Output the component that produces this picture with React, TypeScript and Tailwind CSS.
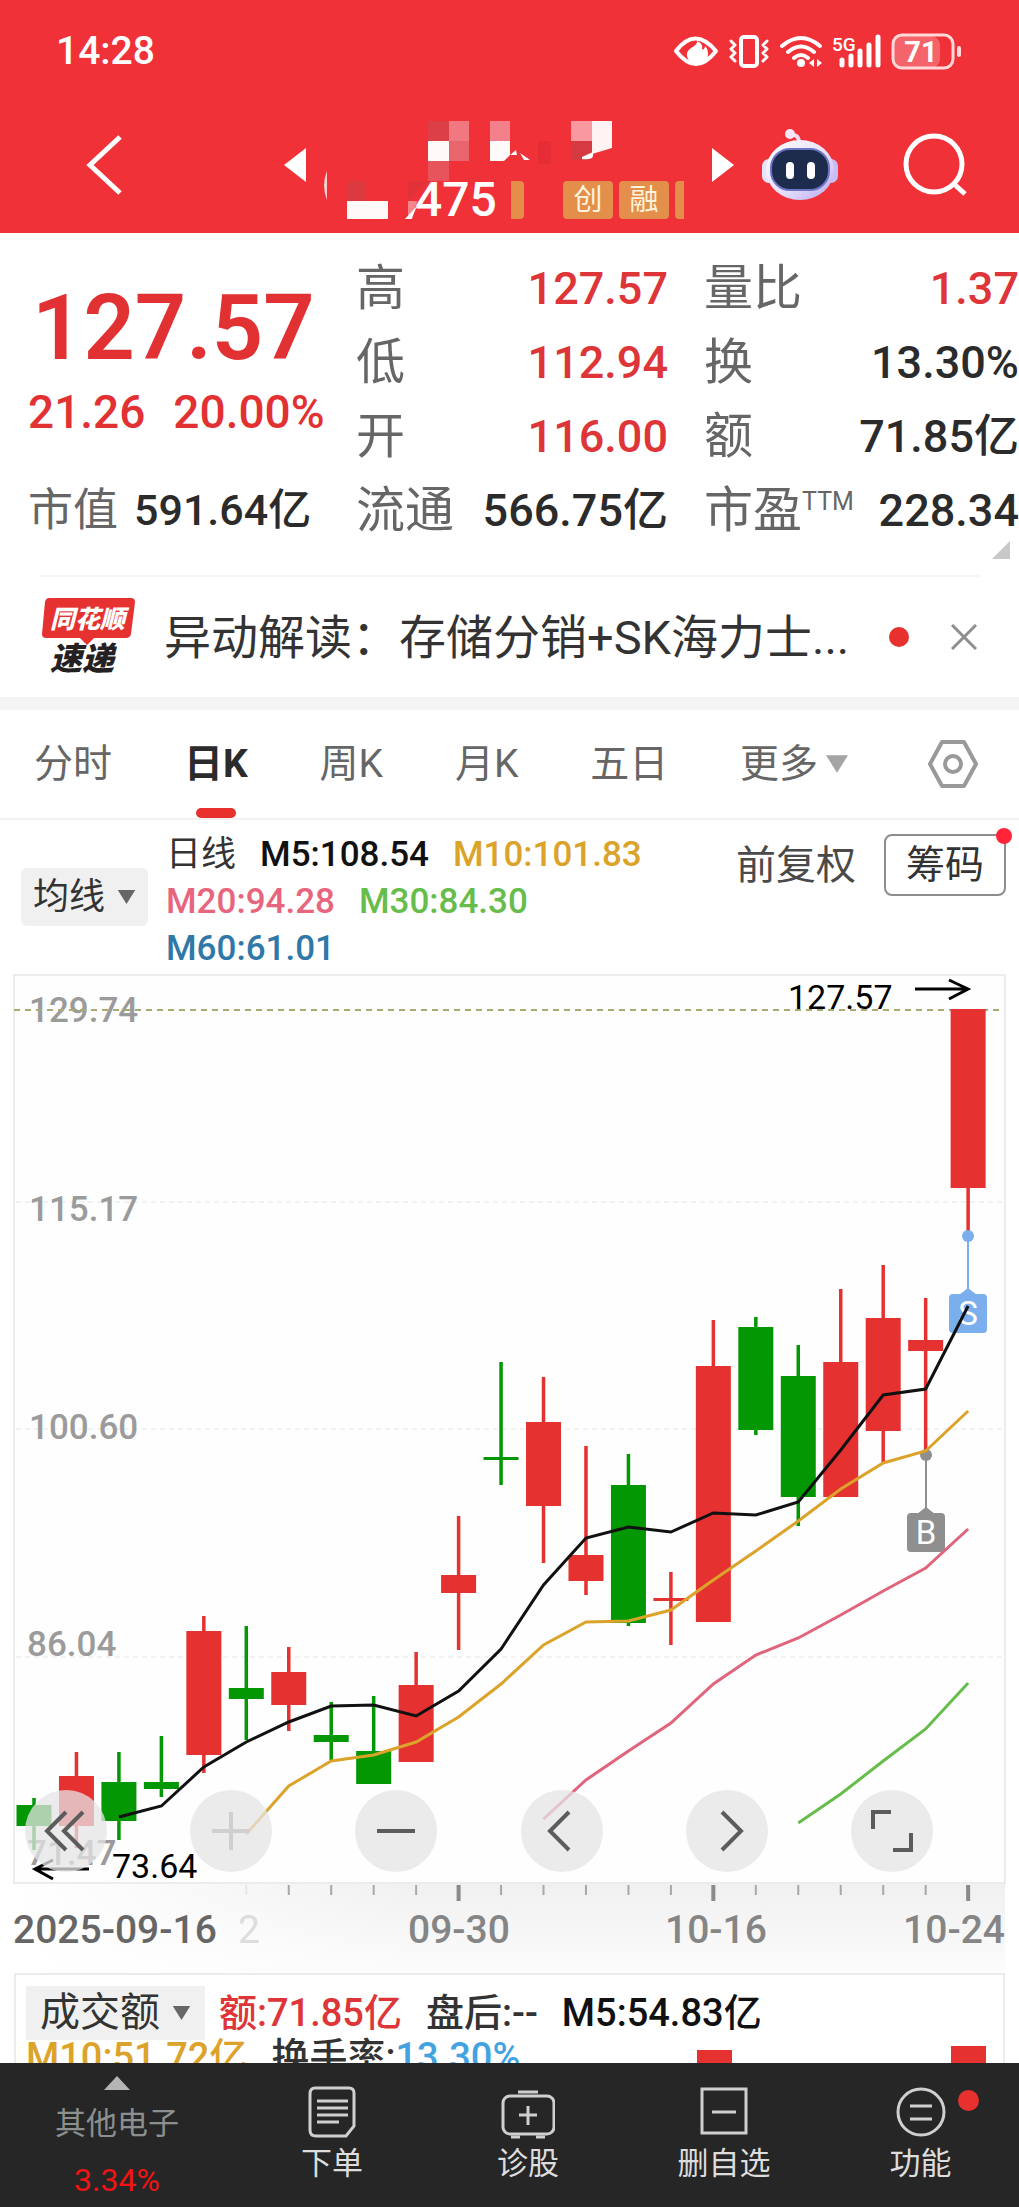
import type { ReactNode } from 'react';

type Candle = {
    up: boolean;
    high: number;
    top: number;
    bottom: number;
    low: number;
};

const RED = '#e63131';
const GREEN = '#039803';

// Chart space: 1019 wide, y grows downwards from the top of the price panel.
const FIRST_X = 34;
const STEP = 42.46;
const BODY_WIDTH = 35;
const TOP = 969;

const candles: Candle[] = [
    { up: false, high: 1798, top: 1805, bottom: 1826, low: 1850 },
    { up: true, high: 1752, top: 1776, bottom: 1826, low: 1848 },
    { up: false, high: 1752, top: 1782, bottom: 1821, low: 1840 },
    { up: false, high: 1736, top: 1782, bottom: 1789, low: 1797 },
    { up: true, high: 1616, top: 1631, bottom: 1755, low: 1773 },
    { up: false, high: 1626, top: 1688, bottom: 1699, low: 1740 },
    { up: true, high: 1647, top: 1672, bottom: 1705, low: 1731 },
    { up: false, high: 1702, top: 1735, bottom: 1742, low: 1760 },
    { up: false, high: 1696, top: 1751, bottom: 1784, low: 1784 },
    { up: true, high: 1652, top: 1685, bottom: 1762, low: 1762 },
    { up: true, high: 1516, top: 1575, bottom: 1593, low: 1650 },
    { up: false, high: 1362, top: 1457, bottom: 1460, low: 1485 },
    { up: true, high: 1377, top: 1422, bottom: 1506, low: 1563 },
    { up: true, high: 1446, top: 1555, bottom: 1581, low: 1595 },
    { up: false, high: 1454, top: 1485, bottom: 1623, low: 1626 },
    { up: true, high: 1572, top: 1598, bottom: 1601, low: 1645 },
    { up: true, high: 1320, top: 1366, bottom: 1622, low: 1622 },
    { up: false, high: 1317, top: 1327, bottom: 1430, low: 1435 },
    { up: false, high: 1345, top: 1376, bottom: 1497, low: 1526 },
    { up: true, high: 1289, top: 1362, bottom: 1497, low: 1497 },
    { up: true, high: 1265, top: 1318, bottom: 1431, low: 1463 },
    { up: true, high: 1298, top: 1340, bottom: 1351, low: 1455 },
    { up: true, high: 1009, top: 1009, bottom: 1188, low: 1236 },
];

const averages = [
    {
        name: 'M10',
        color: '#dba32a',
        start: 5,
        values: [
            1834, 1786, 1761, 1755, 1742, 1717, 1684, 1645, 1622, 1621, 1610,
            1580, 1551, 1521, 1489, 1463, 1451, 1411,
        ],
    },
    {
        name: 'M20',
        color: '#e0647c',
        start: 12,
        values: [
            1819, 1780, 1751, 1723, 1684, 1655, 1638, 1615, 1591, 1568, 1529,
        ],
    },
    {
        name: 'M30',
        color: '#67bd4b',
        start: 18,
        values: [1823, 1794, 1761, 1729, 1683],
    },
    {
        name: 'M5',
        color: '#111111',
        start: 2,
        values: [
            1817, 1806, 1767, 1742, 1722, 1706, 1705, 1716, 1691, 1649, 1585,
            1538, 1527, 1532, 1513, 1515, 1502, 1450, 1395, 1389, 1306,
        ],
    },
];

const priceLabels = [
    { text: '129.74', x: 29, y: 1022 },
    { text: '115.17', x: 29, y: 1221 },
    { text: '100.60', x: 29, y: 1439 },
    { text: '86.04', x: 27, y: 1656 },
    { text: '71.47', x: 27, y: 1865 },
];

const legend = [
    { text: 'M5:108.54', className: 'text-[#111111]' },
    { text: 'M10:101.83', className: 'text-[#dba32a]' },
    { text: 'M20:94.28', className: 'text-[#e8657e]' },
    { text: 'M30:84.30', className: 'text-[#67bd4b]' },
    { text: 'M60:61.01', className: 'text-[#2f78a8]' },
];

const xAt = (index: number) => FIRST_X + index * STEP;

function Caret({ className }: { className: string }) {
    return (
        <svg viewBox="0 0 20 16" className={className} aria-hidden="true">
            <path d="M0 0h20L10 16z" fill="currentColor" />
        </svg>
    );
}

function StatusBar() {
    return (
        <div className="flex h-[102px] items-center justify-between pr-14 pl-14">
            <span className="text-[39px] leading-none font-medium">14:28</span>
            <svg
                viewBox="673 30 290 40"
                className="h-10 w-[290px]"
                fill="none"
                stroke="#fff"
                aria-hidden="true"
            >
                <path
                    d="M676 50q19-25 40 0q-20 26-40 0z"
                    strokeWidth="4"
                    strokeLinejoin="round"
                />
                <path
                    d="M697 40c1 5-8 6-10 12c-1 7 5 11 10 11c7 0 11-5 11-10c0-4-1-6-3-8c0 3-2 4-3 3c1-4-1-6-5-8z"
                    fill="#fff"
                    stroke="none"
                />
                <rect x="741" y="36" width="16" height="29" rx="3" strokeWidth="4" />
                <path
                    d="M731 40l4 4l-4 4l4 4l-4 4l4 4M767 40l-4 4l4 4l-4 4l4 4l-4 4"
                    strokeWidth="3"
                    strokeLinecap="round"
                    strokeLinejoin="round"
                />
                <path
                    d="M782 45q19-16 38 0M788 51q13-11 26 0M794 57q7-6 14 0"
                    strokeWidth="4"
                    strokeLinecap="round"
                />
                <circle cx="801" cy="62" r="4" fill="#fff" stroke="none" />
                <path d="M809 62l5-4v8zM822 62l-5-4v8z" fill="#fff" stroke="none" />
                <text
                    x="832"
                    y="50"
                    fontSize="19"
                    fontWeight="500"
                    fill="#fff"
                    stroke="none"
                >
                    5G
                </text>
                <path
                    d="M842 59v5M851 55v9M860 50v14M869 44v20M878 36v28"
                    strokeWidth="5"
                    strokeLinecap="round"
                />
                <rect
                    x="893"
                    y="35"
                    width="47"
                    height="32"
                    rx="9"
                    fill="#f5646a"
                    stroke="none"
                />
                <rect
                    x="893"
                    y="34"
                    width="60"
                    height="33"
                    rx="9"
                    stroke="#ffd9da"
                    strokeWidth="3"
                />
                <rect
                    x="957"
                    y="45"
                    width="4"
                    height="11"
                    rx="2"
                    fill="#ffd9da"
                    stroke="none"
                />
                <text
                    x="921"
                    y="61"
                    fontSize="29"
                    fontWeight="700"
                    textAnchor="middle"
                    fill="#fff"
                    stroke="none"
                >
                    71
                </text>
            </svg>
        </div>
    );
}

function Badge({ children }: { children: ReactNode }) {
    return (
        <span className="flex h-[38px] w-[50px] items-center justify-center rounded-sm bg-[#e38f4b] text-[29px] leading-none text-[#fff3dc]">
            {children}
        </span>
    );
}

function RobotIcon() {
    return (
        <svg viewBox="0 0 76 72" className="h-[72px] w-[76px]" aria-hidden="true">
            <defs>
                <linearGradient id="shell" x1="0" y1="0" x2="1" y2="1">
                    <stop offset="0" stopColor="#ffffff" />
                    <stop offset="0.6" stopColor="#e3dcfa" />
                    <stop offset="1" stopColor="#b7a4ee" />
                </linearGradient>
            </defs>
            <path
                d="M27 6q10-2 10 8"
                fill="none"
                stroke="#f3dcf3"
                strokeWidth="4"
            />
            <circle cx="28" cy="5" r="5" fill="#f7e6f7" />
            <rect x="0" y="30" width="14" height="24" rx="7" fill="#e9e2fb" />
            <rect x="62" y="30" width="14" height="24" rx="7" fill="#c9bcf3" />
            <ellipse cx="38" cy="41" rx="34" ry="30" fill="url(#shell)" />
            <rect
                x="9"
                y="20"
                width="58"
                height="41"
                rx="19"
                fill="#1d2b4d"
                stroke="#6c74c4"
                strokeWidth="2"
            />
            <rect x="24" y="33" width="8" height="17" rx="4" fill="#fff" />
            <rect x="45" y="33" width="8" height="17" rx="4" fill="#fff" />
        </svg>
    );
}

// The stock name and most of the code are pixelated out.
function MaskedTitle() {
    return (
        <div className="relative flex h-[109px] w-[372px] flex-col justify-end">
            <div className="flex h-[38px] items-center pl-[92px]">
                <span className="w-[82px] text-[48px] leading-none font-medium">
                    475
                </span>
                <span className="ml-[14px] h-[38px] w-[13px] rounded-r-sm bg-[#e38f4b]" />
                <span className="ml-[39px] flex gap-[6px]">
                    <Badge>创</Badge>
                    <Badge>融</Badge>
                    <span className="h-[38px] w-[9px] rounded-l-sm bg-[#e38f4b]" />
                </span>
            </div>
            <svg
                viewBox="323 110 372 109"
                className="absolute inset-0 h-full w-full"
                aria-hidden="true"
            >
                <rect x="428" y="121" width="21" height="20" fill="#dc3f45" />
                <rect x="449" y="121" width="20" height="20" fill="#f17880" />
                <rect x="449" y="141" width="20" height="20" fill="#e8656d" />
                <rect x="428" y="141" width="21" height="20" fill="#fffafa" />
                <rect x="428" y="161" width="21" height="20" fill="#e7545b" />
                <rect x="490" y="121" width="20" height="20" fill="#f3808a" />
                <path d="M490 141h20v14l-6 6h-14z" fill="#fffafa" />
                <path d="M510 155l6-5l1 5zM520 153l10 7h-6z" fill="#fff" />
                <rect x="538" y="141" width="13" height="23" fill="#e62d35" />
                <rect x="571" y="121" width="21" height="20" fill="#fa98a0" />
                <rect x="571" y="141" width="21" height="19" fill="#d63a41" />
                <path d="M592 121h20v27l-20 6z" fill="#fff3f3" />
                <path d="M582 157l11-5v4q-1 4-11 3z" fill="#fff" />
                <rect x="347" y="181" width="19" height="20" fill="#dc3940" />
                <rect x="347" y="201" width="41" height="20" fill="#fffafa" />
                <path d="M408 181h20l-20 20z" fill="#e23239" />
                <path d="M408 201h9l-5 19h-4z" fill="#f4878c" />
                <path d="M404 220l13-14l-6 14z" fill="#fff" />
                <path d="M327 171q-6 14 0 29z" fill="#ffd0d0" />
            </svg>
        </div>
    );
}

function Header() {
    return (
        <header className="bg-[#f03138] text-white">
            <StatusBar />
            <div className="flex h-[131px] items-center pr-13 pb-[6px] pl-[86px]">
                <button type="button" aria-label="返回">
                    <svg
                        viewBox="0 0 36 60"
                        className="h-[60px] w-9"
                        fill="none"
                        stroke="#fff"
                        strokeWidth="5"
                    >
                        <path d="M34 2L4 30l30 28" />
                    </svg>
                </button>
                <div className="ml-auto flex items-center gap-[17px]">
                    <button type="button" aria-label="上一只">
                        <svg viewBox="0 0 22 34" className="h-[34px] w-[22px]">
                            <path d="M22 0v34L0 17z" fill="#fff" />
                        </svg>
                    </button>
                    <MaskedTitle />
                    <button type="button" aria-label="下一只">
                        <svg viewBox="0 0 22 34" className="h-[34px] w-[22px]">
                            <path d="M0 0v34l22-17z" fill="#fff" />
                        </svg>
                    </button>
                </div>
                <button type="button" aria-label="助手" className="ml-7">
                    <RobotIcon />
                </button>
                <button type="button" aria-label="搜索" className="ml-[65px]">
                    <svg
                        viewBox="0 0 64 64"
                        className="size-16"
                        fill="none"
                        stroke="#fff"
                        strokeWidth="5"
                    >
                        <circle cx="31" cy="31" r="28" />
                        <path d="M51 51l11 10" />
                    </svg>
                </button>
            </div>
        </header>
    );
}

type StatProps = {
    label: ReactNode;
    value: string;
    red?: boolean;
};

function Stat({ label, value, red }: StatProps) {
    return (
        <div className="flex h-[74px] items-center justify-between whitespace-nowrap">
            <dt className="text-[49px] leading-none text-[#666666]">{label}</dt>
            <dd
                className={
                    red
                        ? 'text-[45px] leading-none font-medium text-[#dd3538]'
                        : 'text-[45px] leading-none font-medium text-[#2b2b2b]'
                }
            >
                {value}
            </dd>
        </div>
    );
}

function Quote() {
    return (
        <section className="relative grid grid-cols-[292fr_312fr_315fr] gap-x-9 pt-[18px] pb-7 pl-7">
            <div className="min-w-0 whitespace-nowrap">
                <div className="flex h-[222px] flex-col text-[#e23133]">
                    <strong className="pt-8 pl-1 text-[90px] leading-[92px] font-semibold">
                        127.57
                    </strong>
                    <div className="flex gap-7 pt-2 text-[46px] leading-[58px] font-medium">
                        <span>21.26</span>
                        <span>20.00%</span>
                    </div>
                </div>
                <dl className="flex h-[74px] items-center gap-4">
                    <dt className="text-[45px] leading-none text-[#666666]">
                        市值
                    </dt>
                    <dd className="text-[43px] leading-none font-medium text-[#2b2b2b]">
                        591.64亿
                    </dd>
                </dl>
            </div>
            <dl>
                <Stat label="高" value="127.57" red />
                <Stat label="低" value="112.94" red />
                <Stat label="开" value="116.00" red />
                <Stat label="流通" value="566.75亿" />
            </dl>
            <dl>
                <Stat label="量比" value="1.37" red />
                <Stat label="换" value="13.30%" />
                <Stat label="额" value="71.85亿" />
                <Stat
                    label={
                        <span className="flex items-start">
                            市盈
                            <span className="text-[25px] leading-[32px]">
                                TTM
                            </span>
                        </span>
                    }
                    value="228.34"
                />
            </dl>
            <svg
                viewBox="0 0 18 18"
                className="absolute right-[9px] bottom-4 size-[18px]"
                aria-hidden="true"
            >
                <path d="M18 0v18H0z" fill="#c8c8c8" />
            </svg>
        </section>
    );
}

function News() {
    return (
        <section className="mx-10 flex h-[122px] items-center border-t-2 border-[#f5f5f5] whitespace-nowrap">
            <svg
                viewBox="0 0 98 84"
                className="h-[84px] w-[98px] shrink-0"
                role="img"
                aria-label="同花顺速递"
            >
                <path
                    d="M9 3h82q4 0 4 4l-4 32q-1 4-5 4H54l-7 7l-7-7H6q-4 0-4-4L5 7q1-4 4-4z"
                    fill={RED}
                />
                <text
                    x="10"
                    y="33"
                    fontSize="25"
                    fontWeight="900"
                    fontStyle="italic"
                    fill="#fff"
                >
                    同花顺
                </text>
                <text
                    x="10"
                    y="75"
                    fontSize="32"
                    fontWeight="900"
                    fontStyle="italic"
                    fill="#252022"
                >
                    速递
                </text>
            </svg>
            <a
                href="#news"
                className="ml-[26px] text-[47px] leading-none text-[#333333]"
            >
                异动解读：存储分销+SK海力士...
            </a>
            <span className="ml-auto size-5 rounded-full bg-[#e8302f]" />
            <button type="button" aria-label="关闭" className="mr-[2px] ml-[42px]">
                <svg
                    viewBox="0 0 26 26"
                    className="size-[26px]"
                    stroke="#8e8e8e"
                    strokeWidth="3"
                >
                    <path d="M1 1l24 24M25 1L1 25" />
                </svg>
            </button>
        </section>
    );
}

function Tabs() {
    return (
        <nav className="flex h-[110px] items-center justify-between border-b-2 border-[#f1f1f1] pr-[41px] pl-[34px] text-[39px] leading-none text-[#666666]">
            <button type="button">分时</button>
            <button
                type="button"
                className="relative flex h-full items-center font-bold text-[#2b2b2b]"
            >
                日K
                <span className="absolute bottom-0 left-1/2 h-[10px] w-10 -translate-x-1/2 rounded-full bg-[#e8302f]" />
            </button>
            <button type="button">周K</button>
            <button type="button">月K</button>
            <button type="button">五日</button>
            <button type="button" className="mr-2 flex items-center gap-2">
                更多
                <Caret className="h-[18px] w-[22px] text-[#a5a5a5]" />
            </button>
            <button type="button" aria-label="设置">
                <svg
                    viewBox="0 0 50 48"
                    className="h-12 w-[50px]"
                    fill="none"
                    stroke="#999999"
                    strokeWidth="4"
                    strokeLinejoin="round"
                >
                    <path d="M14 2h22l12 22l-12 22H14L2 24z" />
                    <circle cx="25" cy="24" r="8" />
                </svg>
            </button>
        </nav>
    );
}

function Legend() {
    return (
        <section className="flex h-[149px] items-start pt-2 pr-[13px] pl-[21px] whitespace-nowrap">
            <button
                type="button"
                className="mt-[40px] flex h-[58px] items-center gap-3 rounded-md bg-[#f0f0f0] px-3 text-[36px] leading-none text-[#333333]"
            >
                均线
                <Caret className="h-[14px] w-[19px] text-[#666666]" />
            </button>
            <div className="mt-[3px] ml-[18px] flex w-[520px] flex-wrap gap-x-6 text-[35px] leading-[47px] font-medium">
                <span className="font-normal text-[#333333]">日线</span>
                {legend.map((item) => (
                    <span key={item.text} className={item.className}>
                        {item.text}
                    </span>
                ))}
            </div>
            <button
                type="button"
                className="mt-4 ml-auto text-[40px] leading-[44px] text-[#4a4a4a]"
            >
                前复权
            </button>
            <button
                type="button"
                className="relative mt-[6px] ml-7 h-[62px] rounded-lg border-2 border-[#8d8d8d] px-5 text-[39px] leading-none text-[#333333]"
            >
                筹码
                <span className="absolute -top-2 -right-2 size-4 rounded-full bg-[#ff2438]" />
            </button>
        </section>
    );
}

function Marker({
    x,
    y,
    color,
    children,
}: {
    x: number;
    y: number;
    color: string;
    children: string;
}) {
    return (
        <g>
            <path d={`M${x} ${y}v54`} stroke={color} strokeWidth="2" />
            <circle cx={x} cy={y} r="6" fill={color} />
            <path d={`M${x - 9} ${y + 59}l9-7l9 7z`} fill={color} />
            <rect
                x={x - 19}
                y={y + 58}
                width="38"
                height="39"
                rx="4"
                fill={color}
            />
            <text
                x={x}
                y={y + 89}
                fontSize="33"
                textAnchor="middle"
                fill="#fff"
            >
                {children}
            </text>
        </g>
    );
}

function PriceChart() {
    return (
        <svg
            viewBox="0 969 1019 1004"
            className="block w-full"
            role="img"
            aria-label="日K线图"
        >
            <defs>
                <linearGradient id="axis" x1="0" y1="0" x2="0" y2="1">
                    <stop offset="0" stopColor="#f0f0f0" />
                    <stop offset="1" stopColor="#fcfcfc" />
                </linearGradient>
                <linearGradient id="axisFade" x1="0" y1="0" x2="1" y2="0">
                    <stop offset="0" stopColor="#fff" />
                    <stop offset="1" stopColor="#fff" stopOpacity="0" />
                </linearGradient>
            </defs>
            <rect x="14" y="1883" width="991" height="90" fill="url(#axis)" />
            <rect x="14" y="1883" width="420" height="90" fill="url(#axisFade)" />
            <rect
                x="14"
                y={TOP + 6}
                width="991"
                height="908"
                fill="#fefefe"
                stroke="#ebeded"
                strokeWidth="2"
            />
            {[1202, 1429, 1657].map((y) => (
                <path
                    key={y}
                    d={`M16 ${y}h988`}
                    stroke="#e6e6e6"
                    strokeWidth="1"
                    strokeDasharray="5 4"
                />
            ))}
            {priceLabels.map((label) => (
                <text
                    key={label.text}
                    x={label.x}
                    y={label.y}
                    fontSize="35"
                    fontWeight="500"
                    fill="#9b9b9b"
                >
                    {label.text}
                </text>
            ))}
            <path
                d="M14 1010h990"
                stroke="#a9ab72"
                strokeWidth="2"
                strokeDasharray="6 5"
            />
            {candles.map((candle, index) => {
                const x = xAt(index);
                const color = candle.up ? RED : GREEN;
                return (
                    <g key={index} fill={color}>
                        <rect
                            x={x - 1.75}
                            y={candle.high}
                            width="3.5"
                            height={candle.low - candle.high}
                        />
                        <rect
                            x={x - BODY_WIDTH / 2}
                            y={candle.top}
                            width={BODY_WIDTH}
                            height={candle.bottom - candle.top}
                        />
                    </g>
                );
            })}
            <Marker x={968} y={1236} color="#7baeec">
                S
            </Marker>
            <Marker x={926} y={1455} color="#8f8f8f">
                B
            </Marker>
            {averages.map((line) => (
                <polyline
                    key={line.name}
                    points={line.values
                        .map((y, index) => `${xAt(line.start + index)},${y}`)
                        .join(' ')}
                    fill="none"
                    stroke={line.color}
                    strokeWidth="3"
                />
            ))}
            <text x="788" y="1009" fontSize="34">
                127.57
            </text>
            <text x="112" y="1878" fontSize="34">
                73.64
            </text>
            <path
                d="M915 989h52M949 980l19 9l-19 10M89 1869H36M53 1860l-18 9l18 10"
                fill="none"
                stroke="#000"
                strokeWidth="3"
            />
            {candles.slice(5).map((_, index) => {
                const day = index + 5;
                const major = [10, 16, 22].includes(day);
                return (
                    <rect
                        key={day}
                        x={xAt(day) - (major ? 2 : 1)}
                        y="1885"
                        width={major ? 4 : 2}
                        height={major ? 16 : 10}
                        fill={major ? '#8a8a8a' : '#a8a8a8'}
                        opacity={day === 5 ? 0.2 : 1}
                    />
                );
            })}
            <g fontSize="39" fontWeight="500" fill="#858585">
                <text x="13" y="1943" fill="#666666">
                    2025-09-16
                </text>
                <text x="238" y="1943" fontWeight="400" fill="#dddddd">
                    2
                </text>
                <text x="459" y="1943" textAnchor="middle">
                    09-30
                </text>
                <text x="716" y="1943" textAnchor="middle">
                    10-16
                </text>
                <text x="1005" y="1943" textAnchor="end">
                    10-24
                </text>
            </g>
        </svg>
    );
}

const chartControls = [
    {
        label: '最早',
        path: 'M41 22L22 41l19 19M58 22L39 41l19 19',
        className: 'text-[#5c5c5c]',
    },
    { label: '放大', path: 'M22 41h37M41 22v38', className: 'text-[#cfcfcf]' },
    { label: '缩小', path: 'M22 41h38', className: 'text-[#5c5c5c]' },
    { label: '左移', path: 'M48 22L29 41l19 19', className: 'text-[#5c5c5c]' },
    { label: '右移', path: 'M36 22l19 19l-19 19', className: 'text-[#5c5c5c]' },
    {
        label: '全屏',
        path: 'M22 39V22h18M60 43v17H42',
        className: 'text-[#5c5c5c]',
    },
];

function ChartControls() {
    return (
        <div className="absolute inset-x-0 bottom-[101px] flex justify-between pr-[86px] pl-[25px]">
            {chartControls.map((control) => (
                <button
                    key={control.label}
                    type="button"
                    aria-label={control.label}
                    className="size-[82px] rounded-full bg-[#e6e4e6]/75"
                >
                    <svg
                        viewBox="0 0 82 82"
                        className={control.className}
                        fill="none"
                        stroke="currentColor"
                        strokeWidth="4"
                    >
                        <path d={control.path} />
                    </svg>
                </button>
            ))}
        </div>
    );
}

function Volume() {
    return (
        <section className="relative mx-[14px] h-[240px] border-2 border-[#ebeded] pt-[11px] pl-[10px] text-[38px] leading-[43px] font-medium whitespace-nowrap">
            <div className="flex items-center">
                <button
                    type="button"
                    className="flex h-[54px] items-center gap-3 bg-[#f0f0f0] px-[14px] text-[40px] leading-none font-normal text-[#333333]"
                >
                    成交额
                    <Caret className="h-[14px] w-[19px] text-[#666666]" />
                </button>
                <span className="ml-[14px] text-[#dd3538]">额:71.85亿</span>
                <span className="ml-6 text-[#333333]">盘后:--</span>
                <span className="ml-6 text-[#111111]">M5:54.83亿</span>
            </div>
            <div className="-mt-1 flex gap-6">
                <span className="text-[#dba32a]">M10:51.72亿</span>
                <span className="text-[#333333]">
                    换手率:<span className="text-[#42a3e0]">13.30%</span>
                </span>
            </div>
            <div className="absolute right-[17px] bottom-0 flex items-end gap-[219px]">
                <span className="h-[161px] w-[35px] bg-[#e63131]" />
                <span className="h-[165px] w-[35px] bg-[#e63131]" />
            </div>
        </section>
    );
}

function Action({
    label,
    dot,
    children,
}: {
    label: string;
    dot?: boolean;
    children: ReactNode;
}) {
    return (
        <button
            type="button"
            className="relative flex flex-col items-center pt-[22px] text-[31px] leading-[42px] text-[#dddddd]"
        >
            <svg
                viewBox="0 0 54 54"
                className="size-[54px]"
                fill="none"
                stroke="#cfcfcf"
                strokeWidth="3"
                aria-hidden="true"
            >
                {children}
            </svg>
            <span className="mt-1">{label}</span>
            {dot ? (
                <span className="absolute top-[27px] left-1/2 ml-[37px] size-[21px] rounded-full bg-[#e8302f]" />
            ) : null}
        </button>
    );
}

function BottomBar() {
    return (
        <nav className="relative grid h-[144px] shrink-0 grid-cols-[234fr_196fr_196fr_196fr_197fr] bg-[#262626]">
            <button
                type="button"
                className="flex flex-col items-center pt-[13px] text-[31px] leading-[40px] text-[#8b908f]"
            >
                <svg viewBox="0 0 26 14" className="h-[14px] w-[26px]">
                    <path d="M13 0l13 14H0z" fill="#b5b5b5" />
                </svg>
                <span className="mt-[14px]">其他电子</span>
                <span className="mt-4 text-[32px] text-[#f01414]">3.34%</span>
            </button>
            <Action label="下单">
                <path d="M10 3h34q5 0 5 5v33l-8 10H11q-6 0-6-6V9q0-6 5-6z" />
                <path d="M12 16h31M12 23h31M12 30h31M12 37h22" />
            </Action>
            <Action label="诊股">
                <rect x="2" y="11" width="51" height="38" rx="7" />
                <path d="M17 7h20M27 21v19M18 30h18M10 52h9M35 52h9" />
            </Action>
            <Action label="删自选">
                <rect x="5" y="4" width="44" height="44" />
                <path d="M15 27h24" />
            </Action>
            <Action label="功能" dot>
                <circle cx="27" cy="27" r="23" />
                <path d="M16 21h22M16 34h22" />
            </Action>
        </nav>
    );
}

export default function App() {
    return (
        <div className="flex h-screen flex-col bg-white font-[Roboto,'Noto_Sans_CJK_SC',sans-serif]">
            <main className="min-h-0 flex-1 overflow-hidden">
                <Header />
                <Quote />
                <News />
                <div className="h-[13px] bg-[#f4f4f4]" />
                <Tabs />
                <Legend />
                <div className="relative">
                    <PriceChart />
                    <ChartControls />
                </div>
                <Volume />
            </main>
            <BottomBar />
        </div>
    );
}
